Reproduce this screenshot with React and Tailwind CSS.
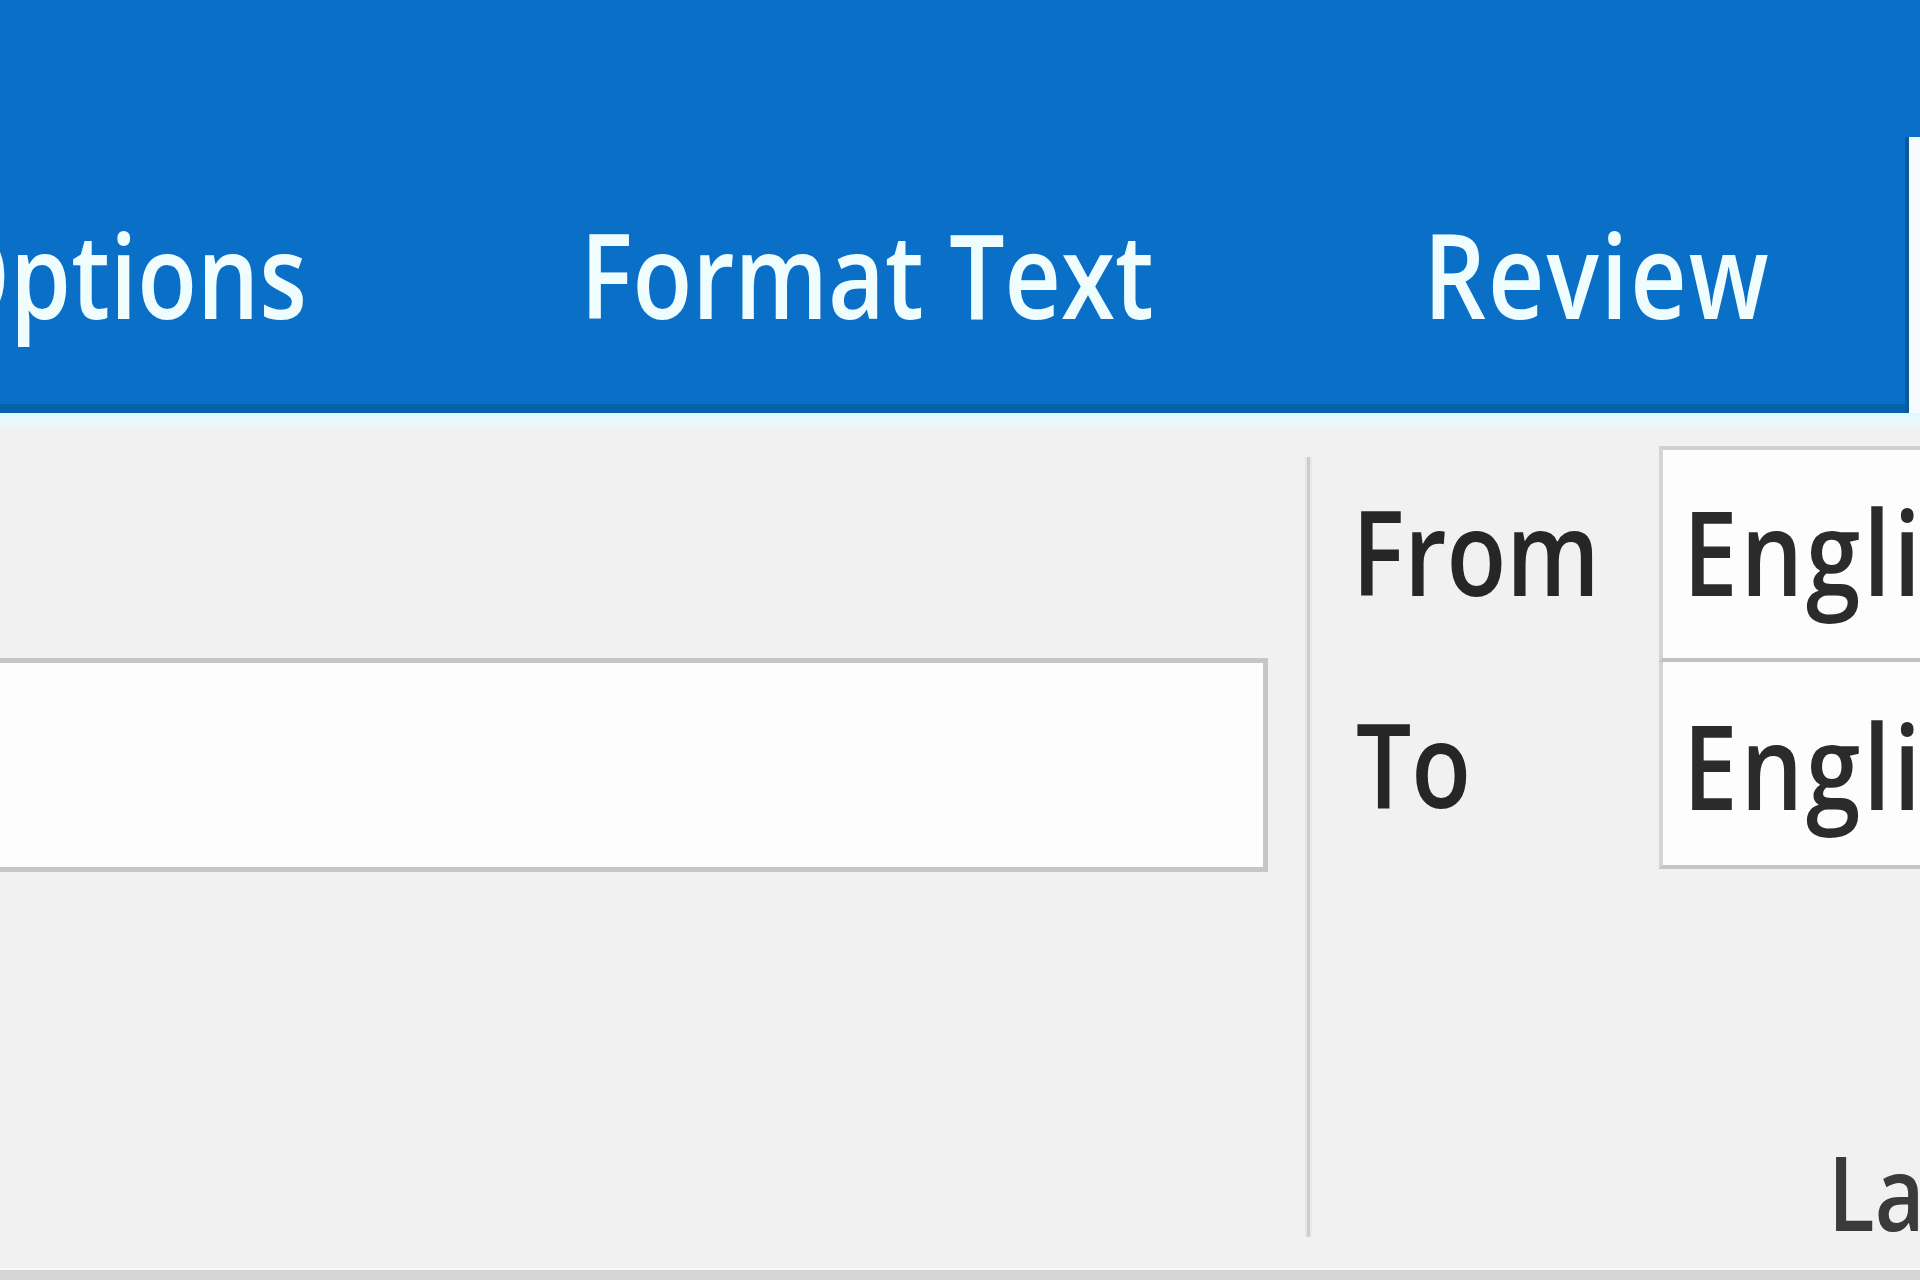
import React from "react";

function T({ children, className = "" }) {
  return (
    <span
      className={
        "inline-block whitespace-nowrap leading-none font-semibold scale-y-[1.2] origin-[50%_88.8%] " +
        className
      }
    >
      {children}
    </span>
  );
}

export default function App() {
  return (
    <div className="w-[1920px] h-[1280px] overflow-hidden flex flex-col bg-[#f1f1f1] font-['Open_Sans','Noto_Sans',sans-serif]">
      {/* Blue ribbon tab bar */}
      <div className="h-[413px] shrink-0 flex flex-col bg-[#0a6fc6]">
        <div className="h-[137px] shrink-0" />
        <div className="h-[276px] flex">
          <div className="w-[445px] shrink-0 flex justify-end pr-[138px] pt-[106px] border-b-[9px] border-[#0861ad]">
            <T className="text-[98px] text-[#effdff]">Options</T>
          </div>
          <div className="w-[844px] shrink-0 flex justify-center pt-[106px] border-b-[9px] border-[#0861ad]">
            <T className="text-[98px] text-[#effdff]">Format Text</T>
          </div>
          <div className="w-[616px] shrink-0 flex justify-center pt-[106px] border-b-[9px] border-[#0861ad]">
            <T className="text-[98px] text-[#effdff] tracking-[2px]">Review</T>
          </div>
          <div className="flex-1 border-l-[4px] border-[#0759a0] bg-[#f7fbfd]" />
        </div>
      </div>

      {/* highlight stripe */}
      <div className="h-[18px] shrink-0 bg-linear-to-b from-[#dcfaff] via-[#ecf8fc] to-[#f1f1f1]" />

      {/* Ribbon body */}
      <div className="h-[837px] shrink-0 flex">
        <div className="w-[1305px] shrink-0">
          <div className="mt-[227px] -ml-[8px] w-[1276px] h-[214px] border-[5px] border-[#c6c6c6] bg-[#fdfdfd]" />
        </div>
        <div className="mt-[26px] w-[7px] h-[780px] shrink-0 flex">
          <div className="w-[2px] bg-[#e6e6e6]" />
          <div className="w-[3px] bg-[#cdcdcd]" />
          <div className="w-[2px] bg-[#e8e8e8]" />
        </div>
        <div className="flex-1 flex flex-col">
          <div className="mt-[15px] flex">
            <div className="w-[347px] shrink-0 flex flex-col">
              <div className="h-[216px] pl-[40px] pt-[63px]">
                <T className="text-[98px] text-[#262626]">From</T>
              </div>
              <div className="h-[207px] pl-[44px] pt-[59px]">
                <T className="text-[98px] text-[#262626]">To</T>
              </div>
            </div>
            <div className="w-[320px] shrink-0 flex flex-col">
              <div className="h-[216px] border-t-[4px] border-l-[4px] border-b-[4px] border-t-[#d0d0d0] border-l-[#d4d4d4] border-b-[#c0c0c0] bg-[#fdfdfd] pl-[20px] pt-[59px]">
                <T className="text-[98px] text-[#2b2b2b] tracking-[3px]">English</T>
              </div>
              <div className="h-[207px] border-l-[4px] border-b-[4px] border-l-[#d4d4d4] border-b-[#c6c6c6] bg-[#fdfdfd] pl-[20px] pt-[61px]">
                <T className="text-[98px] text-[#2b2b2b] tracking-[3px]">English</T>
              </div>
            </div>
          </div>
          <div className="mt-[286px] pl-[516px]">
            <T className="text-[86px] text-[#3a3a3a]">Language</T>
          </div>
        </div>
      </div>

      {/* bottom edge */}
      <div className="h-[12px] shrink-0 border-t-[2px] border-[#f9f9f9] bg-[#d5d5d5]" />
    </div>
  );
}
